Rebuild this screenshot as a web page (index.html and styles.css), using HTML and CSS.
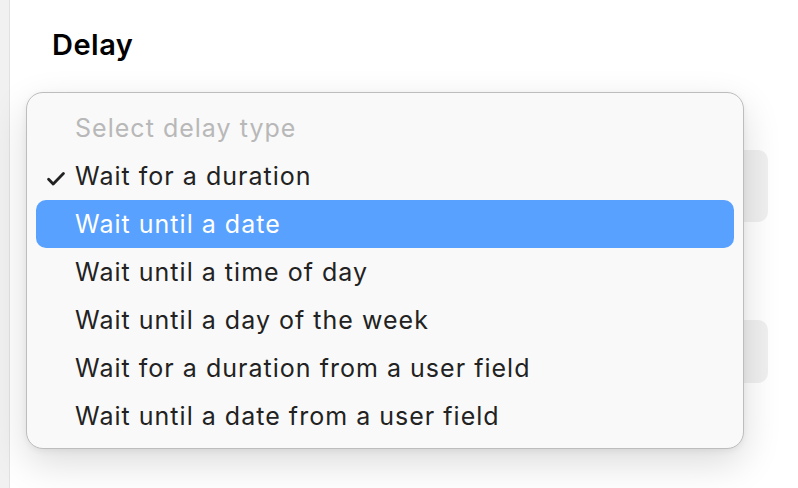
FILE: index.html
```html
<!DOCTYPE html>
<html lang="en">
<head>
  <meta charset="UTF-8">
  <meta name="viewport" content="width=device-width, initial-scale=1.0">
  <title>Delay</title>
  <link rel="stylesheet" href="styles.css">
</head>
<body>
  <div class="page">
    <aside class="sidebar"></aside>

    <main class="content">
      <h1>Delay</h1>
      <div class="fields">
        <div class="field"></div>
        <div class="field field-second"></div>
      </div>

      <!-- open select menu -->
      <ul class="menu">
        <li class="option placeholder">Select delay type</li>
        <li class="option checked">
          <svg class="check" width="18" height="14" viewBox="0 0 18 14"><path d="M1.6 7.2 L6.2 12 L16.4 1.6" fill="none" stroke="#222" stroke-width="2.8" stroke-linecap="round" stroke-linejoin="round"/></svg>
          Wait for a duration
        </li>
        <li class="option selected">Wait until a date</li>
        <li class="option">Wait until a time of day</li>
        <li class="option">Wait until a day of the week</li>
        <li class="option">Wait for a duration from a user field</li>
        <li class="option">Wait until a date from a user field</li>
      </ul>
    </main>
  </div>
</body>
</html>
```

FILE: styles.css
```css
body {
  margin: 0;
  padding: 0;
  font-family: 'Inter', 'Noto Sans', sans-serif;
  background-color: #fff;
  color: #222;
}

.page {
  display: flex;
  height: 488px;
  overflow: hidden;
}

.sidebar {
  width: 9px;
  background-color: #f1f1f1;
  border-right: 1px solid #e2e2e2;
}

.content {
  position: relative;
  flex: 1;
  padding: 0 30px 0 42px;
}

h1 {
  margin: 25px 0 0;
  font-size: 29px;
  line-height: 40px;
  font-weight: 600;
  color: #000;
  letter-spacing: 0.5px;
}

.fields {
  display: flex;
  flex-direction: column;
  gap: 98px;
  margin-top: 85px;
}

.field {
  height: 72px;
  background-color: #f0f0f0;
  border-radius: 10px;
}

.field-second {
  height: 63px;
}

.menu {
  position: absolute;
  left: 16px;
  top: 92px;
  width: 698px;
  margin: 0;
  padding: 11px 9px 8px;
  list-style: none;
  background-color: #f9f9f9;
  border: 1px solid #bdbdbd;
  border-radius: 17px;
  box-shadow: 0 14px 38px rgba(0, 0, 0, 0.14), 0 2px 6px rgba(0, 0, 0, 0.06);
}

.option {
  position: relative;
  height: 48px;
  line-height: 49px;
  padding-left: 39px;
  font-size: 25px;
  letter-spacing: 1.02px;
  color: #222;
  border-radius: 10px;
  white-space: nowrap;
}

.placeholder {
  color: #b8b8b8;
}

.selected {
  background-color: #58a1fe;
  color: #fff;
}

.check {
  position: absolute;
  left: 11px;
  top: 20px;
}
```
